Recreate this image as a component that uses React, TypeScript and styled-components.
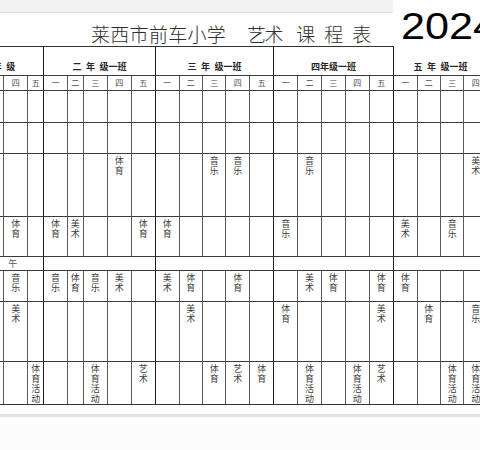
import React from 'react';
import styled, { createGlobalStyle } from 'styled-components';

const GlobalStyle = createGlobalStyle`
  html, body {
    margin: 0;
    padding: 0;
    background: #ffffff;
    width: 480px;
    height: 450px;
    overflow: hidden;
  }
  * { box-sizing: border-box; }
`;

const COLS = [24, 24, 16, 23.4, 16, 24, 24, 24, 24, 23.3, 23.3, 24, 24, 24, 23.4, 24, 24, 24, 24, 23.3, 23.3, 24];
const GROUP_STARTS = new Set([3, 8, 13, 18]);
const ROW_H = [29, 15, 32, 31, 63, 40, 14, 31, 60, 43];

type Group = { label: string; span: number; first?: boolean; noTop?: boolean };
const GROUPS: Group[] = [
  { label: '一\u2002年\u2002级', span: 3, first: true },
  { label: '二\u2002年\u2002级一班', span: 5 },
  { label: '三\u2002年\u2002级一班', span: 5 },
  { label: '四年级一班', span: 5 },
  { label: '五\u2002年\u2002级一班', span: 4, noTop: true },
];

const DAYS = ['三', '四', '五', '一', '二', '三', '四', '五', '一', '二', '三', '四', '五', '一', '二', '三', '四', '五', '一', '二', '三', '四'];

const MORNING: Record<number, string>[] = [
  {},
  {},
  { 6: '体育', 10: '音乐', 11: '音乐', 14: '音乐', 21: '美术' },
  { 1: '体育', 3: '体育', 4: '美术', 7: '体育', 8: '体育', 13: '音乐', 18: '美术', 20: '音乐' },
];
const AFTERNOON: Record<number, string>[] = [
  { 1: '音乐', 3: '音乐', 4: '体育', 5: '音乐', 6: '美术', 8: '美术', 9: '体育', 11: '体育', 14: '美术', 15: '体育', 17: '体育', 18: '体育' },
  { 1: '美术', 9: '美术', 13: '体育', 17: '美术', 19: '体育', 21: '音乐' },
  { 2: '体育活动', 5: '体育活动', 7: '艺术', 10: '体育', 11: '艺术', 12: '体育', 14: '体育活动', 16: '体育活动', 17: '艺术', 20: '体育活动', 21: '体育活动' },
];

const Page = styled.div`
  width: 480px;
  height: 450px;
  display: flex;
  flex-direction: column;
  background: #ffffff;
  overflow: hidden;
`;

const Header = styled.header`
  display: flex;
  height: 46px;
  flex-shrink: 0;
`;

const HeadLeft = styled.div`
  width: 393px;
  display: flex;
  flex-direction: column;
`;

const Strip = styled.div`
  height: 13px;
  background: #f2f2f2;
  border-bottom: 1px solid #dcdcdc;
`;

const Title = styled.h1`
  margin: 0;
  display: flex;
  align-items: flex-start;
  padding: 11px 0 0 91px;
  font-family: "Noto Sans CJK SC", "Noto Sans", sans-serif;
  font-weight: 300;
  font-size: 19px;
  line-height: 19px;
  color: #2e2e2e;
  white-space: nowrap;
`;

const TitleWord = styled.span<{ $gap: number; $spacing: number }>`
  margin-left: ${(p) => p.$gap}px;
  letter-spacing: ${(p) => p.$spacing}px;
`;

const YearBox = styled.div`
  flex: 1;
  background: #ffffff;
  padding: 9px 0 0 8px;
  overflow: hidden;
`;

const Year = styled.div`
  font-family: "Liberation Sans", Arial, sans-serif;
  font-size: 36px;
  line-height: 36px;
  color: #000000;
  transform: scaleX(1.2);
  transform-origin: left top;
  white-space: nowrap;
`;

const Table = styled.div<{ $cols: string; $rows: string }>`
  display: grid;
  grid-template-columns: ${(p) => p.$cols};
  grid-template-rows: ${(p) => p.$rows};
  margin-left: -20.7px;
  border-bottom: 1px solid #333333;
  flex-shrink: 0;
`;

const Cell = styled.div<{ $group: boolean }>`
  border-top: 1px solid #3a3a3a;
  border-left: ${(p) => (p.$group ? '1.5px solid #1c1c1c' : '1px solid #5a5a5a')};
  padding-top: 1.5px;
  overflow: hidden;
`;

const GroupCell = styled.div<{ $span: number; $first?: boolean; $noTop?: boolean }>`
  grid-column: span ${(p) => p.$span};
  border-top: ${(p) => (p.$noTop ? 'none' : '1px solid #333333')};
  border-left: ${(p) => (p.$first ? 'none' : '1.5px solid #1c1c1c')};
  display: flex;
  align-items: flex-end;
  justify-content: ${(p) => (p.$first ? 'flex-start' : 'center')};
  padding-bottom: 4px;
  font-family: "Noto Sans CJK SC", "Noto Sans", sans-serif;
  font-weight: 700;
  font-size: 9px;
  line-height: 9px;
  color: #262626;
  white-space: nowrap;
`;

const DayCell = styled(Cell)`
  display: flex;
  align-items: center;
  justify-content: center;
  padding-top: 0;
  font-family: "Noto Sans CJK SC", "Noto Sans", sans-serif;
  font-weight: 400;
  font-size: 8px;
  line-height: 8px;
  color: #4a4a4a;
`;

const LunchCell = styled.div<{ $span: number; $first?: boolean }>`
  grid-column: span ${(p) => p.$span};
  border-top: 1px solid #3a3a3a;
  border-left: ${(p) => (p.$first ? 'none' : '1.5px solid #1c1c1c')};
  display: flex;
  align-items: center;
  padding-left: 29px;
  font-family: "Noto Sans CJK SC", "Noto Sans", sans-serif;
  font-weight: 400;
  font-size: 9px;
  line-height: 9px;
  color: #555555;
`;

const VText = styled.div`
  width: 9px;
  margin: 0 auto;
  font-family: "Noto Sans CJK SC", "Noto Sans", sans-serif;
  font-weight: 400;
  font-size: 9px;
  line-height: 10px;
  color: #3c3c3c;
  word-break: break-all;
`;

const Footer = styled.div`
  margin-top: 9px;
  height: 3px;
  background: #e2e2e2;
  flex-shrink: 0;
`;

const Rest = styled.div`
  flex: 1;
  background: #fcfcfc;
`;

function LessonRow({ data, row }: { data: Record<number, string>; row: string }) {
  return (
    <>
      {COLS.map((_, i) => (
        <Cell key={`${row}-${i}`} $group={GROUP_STARTS.has(i)}>
          {data[i] ? <VText>{data[i]}</VText> : null}
        </Cell>
      ))}
    </>
  );
}

export default function App() {
  const cols = COLS.map((c) => `${c}px`).join(' ');
  const rows = ROW_H.map((h) => `${h}px`).join(' ');
  return (
    <>
      <GlobalStyle />
      <Page>
        <Header>
          <HeadLeft>
            <Strip />
            <Title>
              <TitleWord $gap={0} $spacing={0.3}>莱西市前车小学</TitleWord>
              <TitleWord $gap={21} $spacing={-1.5}>艺术</TitleWord>
              <TitleWord $gap={14} $spacing={9}>课程表</TitleWord>
            </Title>
          </HeadLeft>
          <YearBox>
            <Year>2024</Year>
          </YearBox>
        </Header>
        <Table $cols={cols} $rows={rows}>
          {GROUPS.map((g, i) => (
            <GroupCell key={`g${i}`} $span={g.span} $first={g.first} $noTop={g.noTop}>
              {g.label}
            </GroupCell>
          ))}
          {DAYS.map((d, i) => (
            <DayCell key={`d${i}`} $group={GROUP_STARTS.has(i)}>
              {d}
            </DayCell>
          ))}
          {MORNING.map((r, i) => (
            <LessonRow key={`m${i}`} data={r} row={`m${i}`} />
          ))}
          {GROUPS.map((g, i) => (
            <LunchCell key={`l${i}`} $span={g.span} $first={g.first}>
              {i === 0 ? '午' : ''}
            </LunchCell>
          ))}
          {AFTERNOON.map((r, i) => (
            <LessonRow key={`a${i}`} data={r} row={`a${i}`} />
          ))}
        </Table>
        <Footer />
        <Rest />
      </Page>
    </>
  );
}
